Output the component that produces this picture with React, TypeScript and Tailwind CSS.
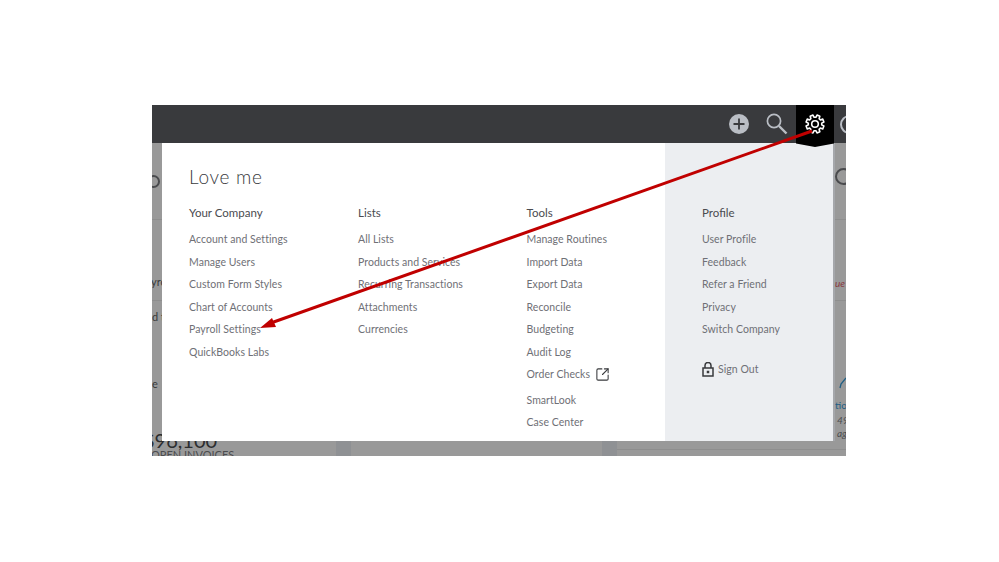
import { SquareArrowOutUpRight } from 'lucide-react'

const columns = [
  {
    title: 'Your Company',
    width: 'w-[169px]',
    links: ['Account and Settings', 'Manage Users', 'Custom Form Styles', 'Chart of Accounts', 'Payroll Settings', 'QuickBooks Labs'],
  },
  {
    title: 'Lists',
    width: 'w-[168.5px]',
    links: ['All Lists', 'Products and Services', 'Recurring Transactions', 'Attachments', 'Currencies'],
  },
]

const tools = ['Manage Routines', 'Import Data', 'Export Data', 'Reconcile', 'Budgeting', 'Audit Log']
const profile = ['User Profile', 'Feedback', 'Refer a Friend', 'Privacy', 'Switch Company']

function MenuLink({ label }: { label: string }) {
  return <div className="h-[22.6px] leading-[24.5px] text-[10.5px] tracking-[0.05px] text-[#6f7076] whitespace-nowrap">{label}</div>
}

function Heading({ label }: { label: string }) {
  return <div className="h-[23px] mb-[3px] leading-[23px] text-[11.5px] text-[#4a4b4f]">{label}</div>
}

function LockIcon() {
  return (
    <svg width="12" height="15" viewBox="0 0 12 15" fill="none" stroke="#393a3d" strokeWidth="1.5">
      <rect x="1" y="6" width="10" height="8" />
      <path d="M3 6V3.5a3 3 0 0 1 6 0V6" />
      <rect x="5" y="9" width="2" height="2" fill="#393a3d" strokeWidth="0.5" />
    </svg>
  )
}

// eight toothed gear, points worked out from the tooth angles
function gearPath() {
  const pts: string[] = []
  for (let i = 0; i < 8; i++) {
    const a = (i * Math.PI) / 4 + Math.PI / 8
    const steps: [number, number][] = [
      [7.4, -0.26],
      [10, -0.17],
      [10, 0.17],
      [7.4, 0.26],
    ]
    for (const [r, d] of steps) {
      pts.push(`${(12 + r * Math.cos(a + d)).toFixed(2)} ${(12 + r * Math.sin(a + d)).toFixed(2)}`)
    }
  }
  return `M${pts.join('L')}Z`
}

function GearIcon() {
  return (
    <svg className="-ml-px" width="22" height="22" viewBox="0 0 24 24" fill="none" stroke="white" strokeWidth="1.7" strokeLinejoin="round">
      <path d={gearPath()} />
      <circle cx="12" cy="12" r="3.6" />
    </svg>
  )
}

function TopBar() {
  return (
    <div className="relative h-[38px] shrink-0 bg-[#393a3d] flex items-center justify-end">
      <div className="w-[20px] mr-[17px] flex">
        <svg width="20" height="20" viewBox="0 0 20 20">
          <circle cx="10" cy="10" r="10" fill="#babec5" />
          <path d="M10 4.5v11M4.5 10h11" stroke="#393a3d" strokeWidth="1.8" />
        </svg>
      </div>
      <svg className="mr-[8px]" width="22" height="22" viewBox="0 0 22 22" fill="none" stroke="#babec5">
        <circle cx="8" cy="8" r="6.6" strokeWidth="1.7" />
        <path d="M13 13l7.5 7.5" strokeWidth="2.4" />
      </svg>
      <div className="relative w-[38px] h-[38px] bg-black flex items-center justify-center z-20">
        <GearIcon />
        <div className="absolute left-0 top-[37px] w-[38px] h-[5px] bg-black [clip-path:polygon(0_0,100%_0,100%_30%,50%_100%,0_30%)]" />
      </div>
      <div className="w-3 h-[38px] overflow-hidden flex items-center">
        <div className="ml-[6px] shrink-0 w-[19px] h-[19px] rounded-full border-2 border-[#babec5]" />
      </div>
    </div>
  )
}

// what shows of the dimmed page left of the menu
function LeftStrip() {
  return (
    <div className="w-[10px] shrink-0 overflow-hidden text-[11px] text-[#38393b] whitespace-nowrap">
      <div className="h-[77px] pt-[32px] border-b border-[#8e8e8e]">
        <div className="-ml-[5px] w-[13px] h-[13px] rounded-full border-2 border-[#4a4b4e]" />
      </div>
      <div className="h-[81px] flex items-end pb-[10px] border-b border-[#8e8e8e] leading-4">
        <span className="-ml-px">yro</span>
      </div>
      <div className="pt-[8px] leading-4">d t</div>
      <div className="mt-[51px] leading-4">e</div>
    </div>
  )
}

function RightStrip() {
  return (
    <div className="w-[13px] shrink-0 overflow-hidden whitespace-nowrap text-[10px] border-l-2 border-[#a5a7ab]">
      <div className="h-[77px] pt-[25px] border-b border-[#8e8e8e]">
        <div className="w-[17px] h-[17px] rounded-full border-2 border-[#4a4b4e]" />
      </div>
      <div className="h-[81px] flex items-end pb-[9px] border-b border-[#8e8e8e] leading-4 italic text-[#8a3a40]">ue</div>
      <div className="pt-[76px] pl-[4px]">
        <svg width="7" height="12" viewBox="0 0 7 12" fill="none" stroke="#1f5f85" strokeWidth="1.3">
          <path d="M1 11l1-4 5-6" />
        </svg>
      </div>
      <div className="mt-[8px] leading-4 text-[#1f5f85]">tio</div>
      <div className="pl-[2px] leading-[14px] italic text-[#4b4c4e]">49</div>
      <div className="pl-[2px] leading-[12px] italic text-[#4b4c4e]">ag</div>
    </div>
  )
}

function Menu() {
  return (
    <div className="relative z-10 w-[671px] shrink-0 flex bg-white">
      <div className="w-[503px] pl-[27px] pt-[21px]">
        <h1 className="h-[27px] leading-[26px] text-[19px] tracking-[0.7px] font-light text-[#393a3d]">Love me</h1>
        <div className="flex mt-[10px]">
          {columns.map((col) => (
            <div key={col.title} className={col.width}>
              <Heading label={col.title} />
              {col.links.map((link) => (
                <MenuLink key={link} label={link} />
              ))}
            </div>
          ))}
          <div>
            <Heading label="Tools" />
            {tools.map((link) => (
              <MenuLink key={link} label={link} />
            ))}
            <div className="flex items-center h-[22.6px] pt-[2px] gap-[5px] text-[10.5px] tracking-[0.05px] text-[#6f7076]">
              Order Checks
              <SquareArrowOutUpRight size={15} strokeWidth={1.7} className="text-[#393a3d]" />
            </div>
            <div className="mt-[2.5px]">
              <MenuLink label="SmartLook" />
              <MenuLink label="Case Center" />
            </div>
          </div>
        </div>
      </div>

      <div className="w-[168px] bg-[#eceef1] pl-[37px] pt-[58px]">
        <Heading label="Profile" />
        {profile.map((link) => (
          <MenuLink key={link} label={link} />
        ))}
        <div className="flex items-center gap-[4px] mt-[19px] h-[22px] text-[10.5px] tracking-[0.05px] text-[#6f7076]">
          <LockIcon />
          Sign Out
        </div>
      </div>
    </div>
  )
}

// bottom edge of the dimmed page, its big figure runs up behind the menu
function BottomStrip() {
  return (
    <div className="h-[15px] flex bg-[#999999]">
      <div className="w-[184px] -mt-[10px] whitespace-nowrap">
        <div className="-ml-[9px] text-[20px] leading-[18px] text-[#2c2d2f]">$96,100</div>
        <div className="-ml-[1px] text-[11px] leading-3 text-[#4b4c4e]">OPEN INVOICES</div>
      </div>
      <div className="w-[15px] bg-[#8f9194]" />
      <div className="w-[251px]" />
      <div className="w-[15px] bg-[#8f9194]" />
      <div className="flex-1 h-[9px] border-b border-[#8e8e8e]" />
    </div>
  )
}

export default function App() {
  return (
    <div className="w-[999px] h-[562px] bg-white pt-[105px] pl-[152px] overflow-hidden font-['Lato',sans-serif]">
      <div className="relative w-[694px] h-[351px] flex flex-col overflow-hidden">
        <TopBar />
        <div className="h-[298px] shrink-0 flex bg-[#999999]">
          <LeftStrip />
          <Menu />
          <RightStrip />
        </div>
        <BottomStrip />

        {/* annotation arrow drawn over the screenshot */}
        <svg className="absolute left-0 top-0 z-30" width="694" height="351" viewBox="0 0 694 351" fill="none">
          <path d="M660 26 L116 219" stroke="#c00000" strokeWidth="3" />
          <path d="M108 223 L120 213 L124 222 Z" fill="#c00000" />
        </svg>
      </div>
    </div>
  )
}
